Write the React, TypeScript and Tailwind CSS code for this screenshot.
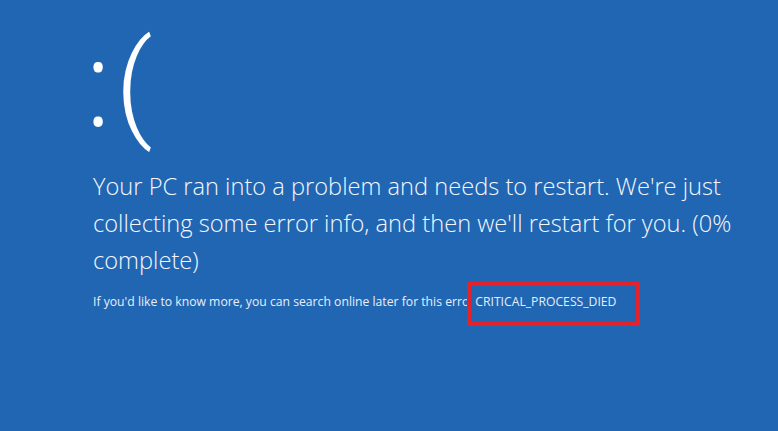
import React from "react";

const App: React.FC = () => {
  return (
    <div className="w-[778px] h-[431px] overflow-hidden bg-[#2166b3] text-white font-['Open_Sans',sans-serif]">
      <div className="pl-[88px] pt-[1px]">
        {/* sad face */}
        <div className="flex items-start font-light">
          <span className="text-[118px] leading-[160px] ml-[-4px]">:</span>
          <span className="font-['Roboto',sans-serif] text-[117px] leading-none ml-[3px] mt-[26px]">(</span>
        </div>

        {/* main message */}
        <p className="mt-[7px] pl-[5px] w-[660px] font-light text-[23.65px] leading-[37px] text-[#f4f7fb]">
          Your PC ran into a problem and needs to restart. We're just
          collecting some error info, and then we'll restart for you. (0%
          complete)
        </p>

        {/* details line */}
        <div className="mt-[3px] pl-[5px] flex items-center text-[12.2px] text-[#e8eef7]">
          <span className="mt-[-4px]">If you'd like to know more, you can search online later for this erro</span>
          <span className="ml-[-2px] border-[4px] border-[#e3222c] pl-[4px] pr-[20px] pt-[7px] pb-[11px] leading-[18px] text-[12.2px]">
            CRITICAL_PROCESS_DIED
          </span>
        </div>
      </div>
    </div>
  );
};

export default App;
